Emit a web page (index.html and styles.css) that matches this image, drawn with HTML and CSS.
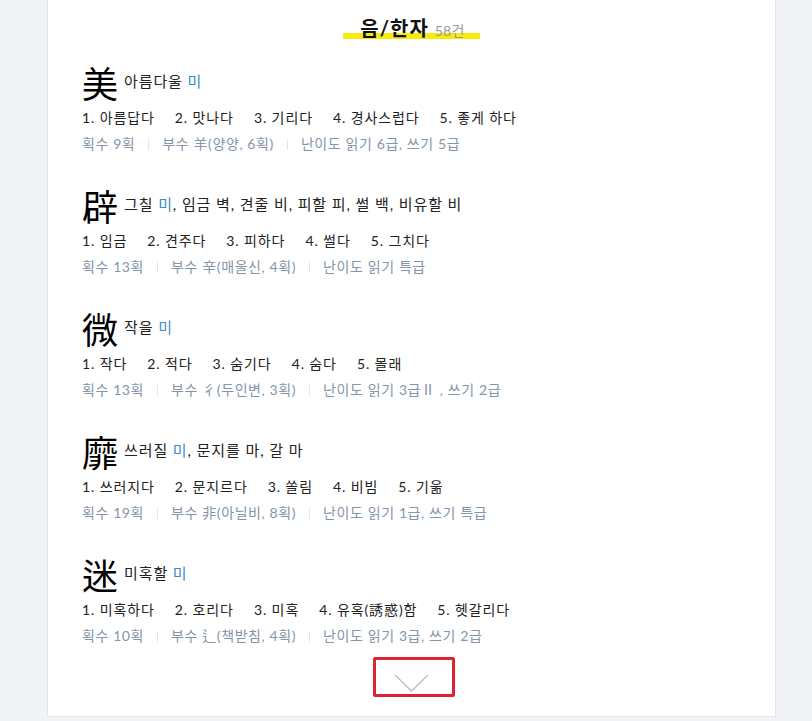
FILE: index.html
```html
<!DOCTYPE html>
<html lang="ko">
<head>
<meta charset="utf-8">
<title>음/한자</title>
<link rel="stylesheet" href="styles.css">
</head>
<body>
<div class="card">
  <h2 class="title"><span class="mark">음/한자 <small>58건</small></span></h2>

  <div class="entry">
    <div class="head"><span class="hanja">美</span><span class="mean">아름다울 <em>미</em></span></div>
    <ul class="defs"><li>1. 아름답다</li><li>2. 맛나다</li><li>3. 기리다</li><li>4. 경사스럽다</li><li>5. 좋게 하다</li></ul>
    <div class="info"><span>획수 9획</span><i class="sep"></i><span>부수 羊(양양, 6획)</span><i class="sep"></i><span>난이도 읽기 6급, 쓰기 5급</span></div>
  </div>

  <div class="entry">
    <div class="head"><span class="hanja">辟</span><span class="mean">그칠 <em>미</em>, 임금 벽, 견줄 비, 피할 피, 썰 백, 비유할 비</span></div>
    <ul class="defs"><li>1. 임금</li><li>2. 견주다</li><li>3. 피하다</li><li>4. 썰다</li><li>5. 그치다</li></ul>
    <div class="info"><span>획수 13획</span><i class="sep"></i><span>부수 辛(매울신, 4획)</span><i class="sep"></i><span>난이도 읽기 특급</span></div>
  </div>

  <div class="entry">
    <div class="head"><span class="hanja">微</span><span class="mean">작을 <em>미</em></span></div>
    <ul class="defs"><li>1. 작다</li><li>2. 적다</li><li>3. 숨기다</li><li>4. 숨다</li><li>5. 몰래</li></ul>
    <div class="info"><span>획수 13획</span><i class="sep"></i><span>부수 彳(두인변, 3획)</span><i class="sep"></i><span>난이도 읽기 3급Ⅱ , 쓰기 2급</span></div>
  </div>

  <div class="entry">
    <div class="head"><span class="hanja">靡</span><span class="mean">쓰러질 <em>미</em>, 문지를 마, 갈 마</span></div>
    <ul class="defs"><li>1. 쓰러지다</li><li>2. 문지르다</li><li>3. 쏠림</li><li>4. 비빔</li><li>5. 기욺</li></ul>
    <div class="info"><span>획수 19획</span><i class="sep"></i><span>부수 非(아닐비, 8획)</span><i class="sep"></i><span>난이도 읽기 1급, 쓰기 특급</span></div>
  </div>

  <div class="entry entry-last">
    <div class="head"><span class="hanja">迷</span><span class="mean">미혹할 <em>미</em></span></div>
    <ul class="defs"><li>1. 미혹하다</li><li>2. 호리다</li><li>3. 미혹</li><li>4. 유혹(誘惑)함</li><li>5. 헷갈리다</li></ul>
    <div class="info"><span>획수 10획</span><i class="sep"></i><span>부수 辶(책받침, 4획)</span><i class="sep"></i><span>난이도 읽기 3급, 쓰기 2급</span></div>
  </div>

  <div class="more">
    <button class="more-btn" type="button" aria-label="더보기">
      <svg width="35" height="18" viewBox="0 0 35 18"><polyline points="1,1 17.5,17 34,1" fill="none" stroke="#bdbdbd" stroke-width="1.3"/></svg>
    </button>
  </div>
</div>
</body>
</html>
```

FILE: styles.css
```css
html, body {
  margin: 0;
  padding: 0;
}
body {
  background: #f2f3f6;
  font-family: Lato, "Noto Sans CJK KR", sans-serif;
  color: #222;
}
.card {
  margin-left: 47px;
  width: 693px;
  background: #fff;
  border: 1px solid #e4e6ea;
  border-top: none;
  padding: 14px 0 19px 34px;
  box-sizing: content-box;
}
.title {
  margin: 0 0 19px -34px;
  text-align: center;
  font-size: 20px;
  font-weight: 700;
  line-height: 28px;
  letter-spacing: 1px;
  color: #111;
}
.mark {
  display: inline-block;
  padding: 0 15px 0 17px;
  background: linear-gradient(transparent 19px, #f6eb0c 19px, #f6eb0c 25px, transparent 25px);
}
.mark small {
  font-size: 14px;
  font-weight: 400;
  letter-spacing: 0.3px;
  color: #999;
}
.entry {
  margin-bottom: 33px;
}
.head {
  display: flex;
  align-items: center;
  gap: 6px;
  height: 36px;
}
.hanja {
  font-family: "Noto Sans CJK KR", sans-serif;
  font-size: 36px;
  line-height: 36px;
  color: #000;
}
.mean {
  font-size: 15px;
  line-height: 20px;
  letter-spacing: 0.9px;
  color: #222;
  margin-top: -2px;
}
.mean em {
  font-style: normal;
  color: #3a8bc6;
}
.defs {
  list-style: none;
  margin: 8px 0 0;
  padding: 0;
  display: flex;
  gap: 20px;
  font-size: 14px;
  line-height: 20px;
  letter-spacing: 0.9px;
  color: #222;
}
.info {
  margin-top: 6px;
  display: flex;
  align-items: center;
  font-size: 14px;
  line-height: 20px;
  letter-spacing: 0.6px;
  color: #8395aa;
}
.sep {
  display: block;
  width: 1px;
  height: 11px;
  background: #e3e5e8;
  margin: 0 13px;
}
.entry-last {
  margin-bottom: 11px;
}
.more {
  display: flex;
  justify-content: center;
  margin-left: -34px;
}
.more-btn {
  display: block;
  width: 82px;
  height: 40px;
  box-sizing: border-box;
  border: 3px solid #dc2430;
  border-radius: 2px;
  background: #fff;
  padding: 11px 0 0;
  margin-left: 5px;
  cursor: pointer;
}
.more-btn svg {
  display: block;
  margin-left: 18px;
}
```
